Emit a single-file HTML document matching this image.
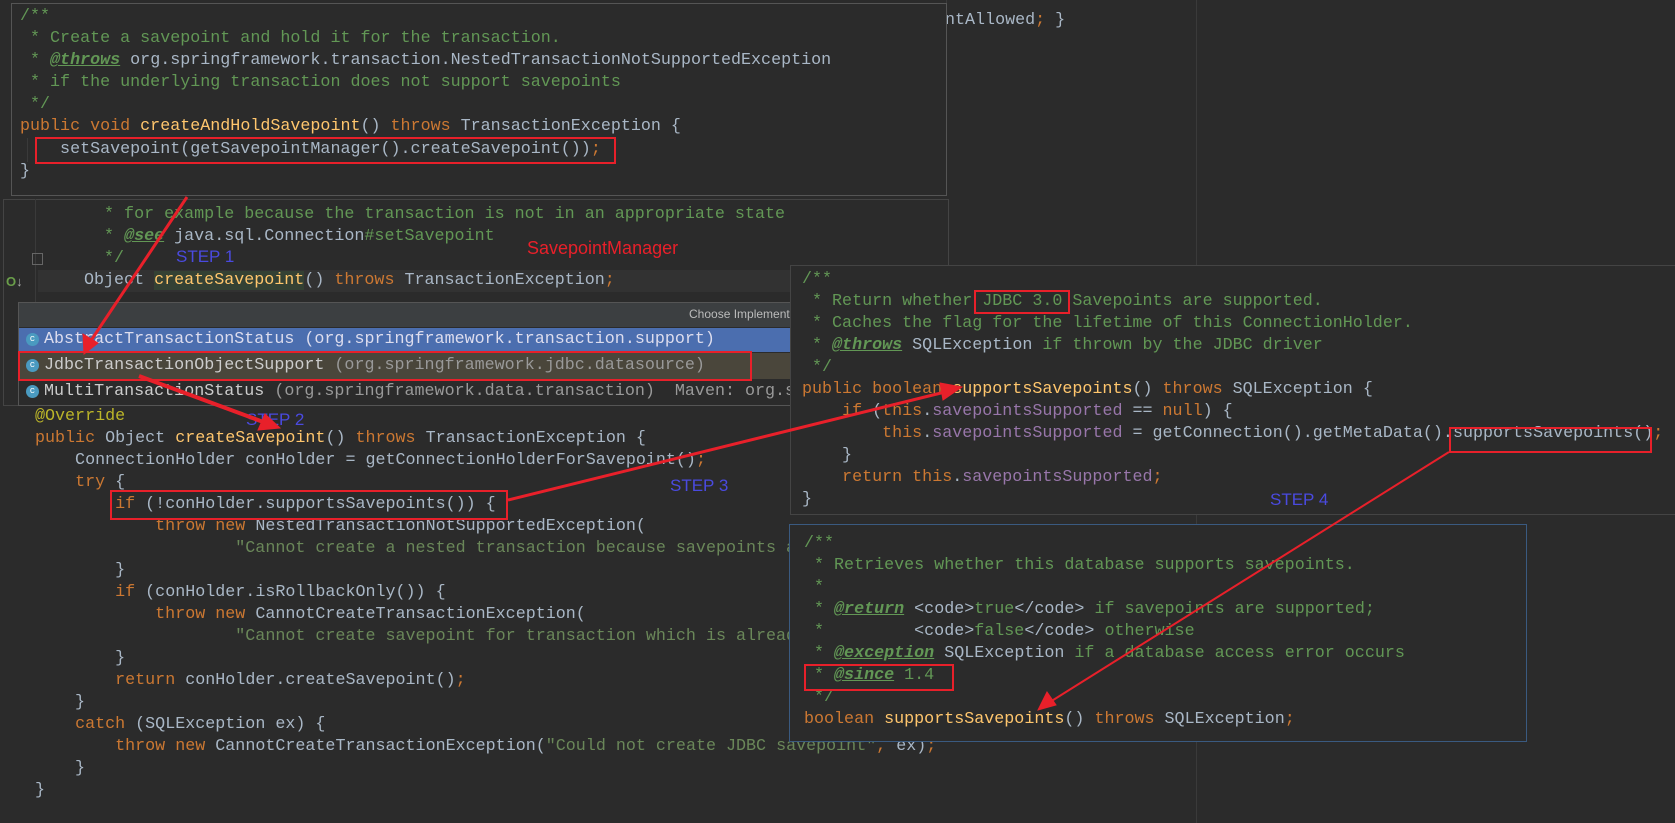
<!DOCTYPE html>
<html><head><meta charset="utf-8"><style>
body{margin:0;width:1675px;height:823px;background:#2b2b2b;overflow:hidden;position:relative;font-family:"Liberation Mono",monospace;font-size:16.7px;color:#a9b7c6}
.p{position:absolute;background:#2b2b2b}
.l{position:absolute;white-space:pre;height:22px;line-height:22px}
.k{color:#cc7832}.c{color:#629755}.m{color:#ffc66d}.f{color:#9876aa}.s{color:#6a8759}.a{color:#bbb529}
.t{color:#629755;font-weight:bold;font-style:italic;text-decoration:underline}
.g{color:#a9b7c6}
.box{position:absolute;border:2px solid #e8202a;box-sizing:border-box}
.step{position:absolute;font-family:"Liberation Sans",sans-serif;font-size:17px;color:#4a4ae0}
</style></head><body>
<div style="position:absolute;left:1196px;top:0;width:1px;height:823px;background:#3a3a3a"></div>
<div style="position:absolute;left:946px;top:0;width:1px;height:40px;background:#3a3a3a"></div>
<div class="l" style="left:945px;top:10px"><span class="g">ntAllowed</span><span class="k">;</span> }</div>

<!-- second panel -->
<div class="p" style="left:3px;top:199px;width:944px;height:205px;border:1px solid #444;background:#2b2b2b"></div>
<div style="position:absolute;left:38px;top:270px;width:908px;height:22px;background:#323232"></div>
<div style="position:absolute;left:35px;top:199px;width:1px;height:205px;background:#3a3a3a"></div>
<div class="l c" style="left:84px;top:204px">  * for example because the transaction is not in an appropriate state</div>
<div class="l c" style="left:84px;top:226px">  * <span class="t">@see</span> <span class="g">java.sql.Connection</span>#setSavepoint</div>
<div class="l c" style="left:84px;top:248px">  */</div>
<div class="l" style="left:84px;top:270px">Object <span class="m" style="background:#344134">createSavepoint</span>() <span class="k">throws</span> TransactionException<span class="k">;</span></div>
<div style="position:absolute;left:6px;top:274px;color:#6a9e4a;font-size:13px;font-family:'Liberation Sans',sans-serif;font-weight:bold">O<span style="color:#aaa">↓</span></div>
<div style="position:absolute;left:32px;top:253px;width:9px;height:10px;border:1px solid #666"></div>
<div style="position:absolute;left:527px;top:238px;font-family:'Liberation Sans',sans-serif;font-size:18px;color:#e8202a">SavepointManager</div>
<div class="step" style="left:176px;top:247px">STEP 1</div>

<!-- chooser -->
<div class="p" style="left:18px;top:302px;width:772px;height:102px;background:#2b2b2b;border:1px solid #555"></div>
<div style="position:absolute;left:19px;top:303px;width:771px;height:24px;background:#3c3f41"></div>
<div style="position:absolute;left:689px;top:307px;font-family:'Liberation Sans',sans-serif;font-size:12px;color:#bbb">Choose Implementation</div>
<div style="position:absolute;left:19px;top:328px;width:771px;height:24px;background:#4b6eaf"></div>
<div style="position:absolute;left:19px;top:353px;width:771px;height:26px;background:#4a463b"></div>
<div style="position:absolute;left:26px;top:333px;width:13px;height:13px;border-radius:50%;background:#4a9ac0;font-size:9px;line-height:13px;text-align:center;color:#fff">c</div>
<div style="position:absolute;left:26px;top:359px;width:13px;height:13px;border-radius:50%;background:#4a9ac0;font-size:9px;line-height:13px;text-align:center;color:#fff">c</div>
<div style="position:absolute;left:26px;top:385px;width:13px;height:13px;border-radius:50%;background:#4a9ac0;font-size:9px;line-height:13px;text-align:center;color:#fff">c</div>
<div class="l" style="left:44px;top:329px;color:#dde">AbstractTransactionStatus (org.springframework.transaction.support)</div>
<div class="l" style="left:44px;top:355px;color:#ccc">JdbcTransactionObjectSupport <span style="color:#999">(org.springframework.jdbc.datasource)</span></div>
<div class="l" style="left:44px;top:381px;color:#ccc">MultiTransactionStatus <span style="color:#999">(org.springframework.data.transaction)</span>  <span style="color:#999">Maven: org.s</span></div>
<div class="box" style="left:18px;top:351px;width:734px;height:30px"></div>

<!-- top popup -->
<div class="p" style="left:11px;top:3px;width:934px;height:191px;border:1px solid #555;background:#2b2b2b"></div>
<div style="position:absolute;left:27px;top:138px;width:1px;height:24px;background:#3a3a3a"></div>
<div class="l c" style="left:20px;top:6px">/**</div>
<div class="l c" style="left:20px;top:28px"> * Create a savepoint and hold it for the transaction.</div>
<div class="l c" style="left:20px;top:50px"> * <span class="t">@throws</span> <span class="g">org.springframework.transaction.NestedTransactionNotSupportedException</span></div>
<div class="l c" style="left:20px;top:72px"> * if the underlying transaction does not support savepoints</div>
<div class="l c" style="left:20px;top:94px"> */</div>
<div class="l" style="left:20px;top:116px"><span class="k">public void</span> <span class="m">createAndHoldSavepoint</span>() <span class="k">throws</span> TransactionException {</div>
<div class="l" style="left:20px;top:139px">    setSavepoint(getSavepointManager().createSavepoint())<span class="k">;</span></div>
<div class="l" style="left:20px;top:161px">}</div>
<div class="box" style="left:35px;top:137px;width:581px;height:27px"></div>

<!-- main code -->
<div class="l a" style="left:35px;top:406px">@Override</div>
<div class="l" style="left:35px;top:428px"><span class="k">public</span> Object <span class="m">createSavepoint</span>() <span class="k">throws</span> TransactionException {</div>
<div class="l" style="left:35px;top:450px">    ConnectionHolder conHolder = getConnectionHolderForSavepoint()<span class="k">;</span></div>
<div class="l" style="left:35px;top:472px">    <span class="k">try</span> {</div>
<div class="l" style="left:35px;top:494px">        <span class="k">if</span> (!conHolder.supportsSavepoints()) {</div>
<div class="l" style="left:35px;top:516px">            <span class="k">throw new</span> NestedTransactionNotSupportedException(</div>
<div class="l s" style="left:35px;top:538px">                    "Cannot create a nested transaction because savepoints a</div>
<div class="l" style="left:35px;top:560px">        }</div>
<div class="l" style="left:35px;top:582px">        <span class="k">if</span> (conHolder.isRollbackOnly()) {</div>
<div class="l" style="left:35px;top:604px">            <span class="k">throw new</span> CannotCreateTransactionException(</div>
<div class="l s" style="left:35px;top:626px">                    "Cannot create savepoint for transaction which is alread</div>
<div class="l" style="left:35px;top:648px">        }</div>
<div class="l" style="left:35px;top:670px">        <span class="k">return</span> conHolder.createSavepoint()<span class="k">;</span></div>
<div class="l" style="left:35px;top:692px">    }</div>
<div class="l" style="left:35px;top:714px">    <span class="k">catch</span> (SQLException ex) {</div>
<div class="l" style="left:35px;top:736px">        <span class="k">throw new</span> CannotCreateTransactionException(<span class="s">"Could not create JDBC savepoint"</span><span class="k">,</span> ex)<span class="k">;</span></div>
<div class="l" style="left:35px;top:758px">    }</div>
<div class="l" style="left:35px;top:780px">}</div>
<div class="box" style="left:110px;top:490px;width:398px;height:30px"></div>
<div class="step" style="left:246px;top:410px">STEP 2</div>
<div class="step" style="left:670px;top:476px">STEP 3</div>

<!-- right panel 1 -->
<div class="p" style="left:790px;top:265px;width:885px;height:248px;border:1px solid #444;background:#2b2b2b"></div>
<div class="l c" style="left:802px;top:269px">/**</div>
<div class="l c" style="left:802px;top:291px"> * Return whether JDBC 3.0 Savepoints are supported.</div>
<div class="l c" style="left:802px;top:313px"> * Caches the flag for the lifetime of this ConnectionHolder.</div>
<div class="l c" style="left:802px;top:335px"> * <span class="t">@throws</span> <span class="g">SQLException</span> if thrown by the JDBC driver</div>
<div class="l c" style="left:802px;top:357px"> */</div>
<div class="l" style="left:802px;top:379px"><span class="k">public boolean</span> <span class="m">supportsSavepoints</span>() <span class="k">throws</span> SQLException {</div>
<div class="l" style="left:802px;top:401px">    <span class="k">if</span> (<span class="k">this</span>.<span class="f">savepointsSupported</span> == <span class="k">null</span>) {</div>
<div class="l" style="left:802px;top:423px">        <span class="k">this</span>.<span class="f">savepointsSupported</span> = getConnection().getMetaData().supportsSavepoints()<span class="k">;</span></div>
<div class="l" style="left:802px;top:445px">    }</div>
<div class="l" style="left:802px;top:467px">    <span class="k">return this</span>.<span class="f">savepointsSupported</span><span class="k">;</span></div>
<div class="l" style="left:802px;top:489px">}</div>
<div class="box" style="left:974px;top:290px;width:96px;height:24px"></div>
<div class="box" style="left:1449px;top:427px;width:203px;height:26px"></div>
<div class="step" style="left:1270px;top:490px">STEP 4</div>

<!-- right panel 2 -->
<div class="p" style="left:789px;top:524px;width:736px;height:216px;border:1px solid #3a5a80;background:#2b2b2b"></div>
<div class="l c" style="left:804px;top:533px">/**</div>
<div class="l c" style="left:804px;top:555px"> * Retrieves whether this database supports savepoints.</div>
<div class="l c" style="left:804px;top:577px"> *</div>
<div class="l c" style="left:804px;top:599px"> * <span class="t">@return</span> <span class="g">&lt;code&gt;</span>true<span class="g">&lt;/code&gt;</span> if savepoints are supported;</div>
<div class="l c" style="left:804px;top:621px"> *         <span class="g">&lt;code&gt;</span>false<span class="g">&lt;/code&gt;</span> otherwise</div>
<div class="l c" style="left:804px;top:643px"> * <span class="t">@exception</span> <span class="g">SQLException</span> if a database access error occurs</div>
<div class="l c" style="left:804px;top:665px"> * <span class="t">@since</span> 1.4</div>
<div class="l c" style="left:804px;top:687px"> */</div>
<div class="l" style="left:804px;top:709px"><span class="k">boolean</span> <span class="m">supportsSavepoints</span>() <span class="k">throws</span> SQLException<span class="k">;</span></div>
<div class="box" style="left:804px;top:664px;width:150px;height:27px"></div>

<svg style="position:absolute;left:0;top:0" width="1675" height="823">
<g stroke="#e8202a" fill="#e8202a">
<line x1="187" y1="197" x2="90" y2="342" stroke-width="3"/>
<polygon points="84,354 83,334 98,343"/>
<line x1="139" y1="376" x2="266" y2="423" stroke-width="4"/>
<polygon points="280,428 258,430 265,414"/>
<line x1="508" y1="500" x2="945" y2="392" stroke-width="3"/>
<polygon points="962,387 943,400 940,383"/>
<line x1="1449" y1="452" x2="1050" y2="702" stroke-width="2"/>
<polygon points="1038,710 1047,692 1056,705"/>
</g>
</svg>
</body></html>
